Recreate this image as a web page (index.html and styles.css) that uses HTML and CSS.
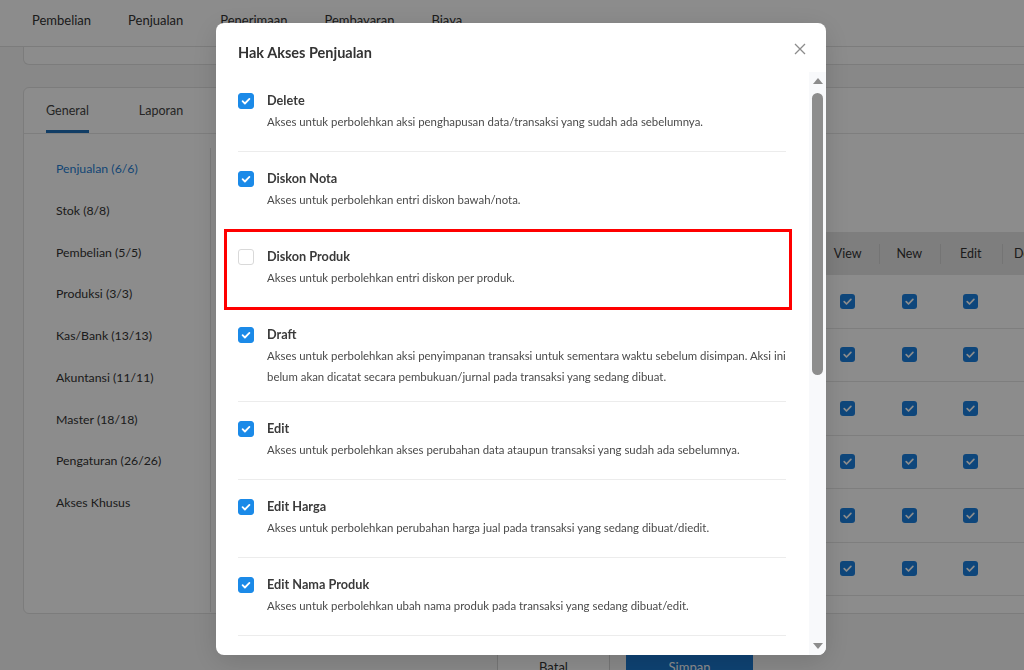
FILE: index.html
```html
<!DOCTYPE html>
<html lang="id">
<head>
    <meta charset="UTF-8">
    <meta name="viewport" content="width=device-width, initial-scale=1.0">
    <title>Hak Akses Penjualan</title>
    <link rel="stylesheet" href="styles.css">
</head>
<body>
    <div class="page">
        <header class="topnav">
            <a href="#">Pembelian</a>
            <a href="#">Penjualan</a>
            <a href="#">Penerimaan</a>
            <a href="#">Pembayaran</a>
            <a href="#">Biaya</a>
        </header>

        <div class="card card-top"></div>

        <section class="card card-main">
            <div class="tabs">
                <span class="tab active">General</span>
                <span class="tab">Laporan</span>
            </div>
            <div class="card-body">
                <ul class="side-menu">
                    <li class="active">Penjualan (6/6)</li>
                    <li>Stok (8/8)</li>
                    <li>Pembelian (5/5)</li>
                    <li>Produksi (3/3)</li>
                    <li>Kas/Bank (13/13)</li>
                    <li>Akuntansi (11/11)</li>
                    <li>Master (18/18)</li>
                    <li>Pengaturan (26/26)</li>
                    <li>Akses Khusus</li>
                </ul>
                <div class="perm-table">
                    <div class="perm-row perm-head">
                        <div class="cell name">Transaksi</div>
                        <div class="cell">View</div>
                        <div class="cell">New</div>
                        <div class="cell">Edit</div>
                        <div class="cell">Delete</div>
                        <div class="cell">Print</div>
                    </div>
                    <div class="perm-row">
                        <div class="cell name">Pesanan Penjualan</div>
                        <div class="cell"><span class="tick"></span></div>
                        <div class="cell"><span class="tick"></span></div>
                        <div class="cell"><span class="tick"></span></div>
                        <div class="cell"><span class="tick"></span></div>
                        <div class="cell"><span class="tick"></span></div>
                    </div>
                    <div class="perm-row">
                        <div class="cell name">Pengiriman</div>
                        <div class="cell"><span class="tick"></span></div>
                        <div class="cell"><span class="tick"></span></div>
                        <div class="cell"><span class="tick"></span></div>
                        <div class="cell"><span class="tick"></span></div>
                        <div class="cell"><span class="tick"></span></div>
                    </div>
                    <div class="perm-row">
                        <div class="cell name">Penjualan</div>
                        <div class="cell"><span class="tick"></span></div>
                        <div class="cell"><span class="tick"></span></div>
                        <div class="cell"><span class="tick"></span></div>
                        <div class="cell"><span class="tick"></span></div>
                        <div class="cell"><span class="tick"></span></div>
                    </div>
                    <div class="perm-row">
                        <div class="cell name">Retur Penjualan</div>
                        <div class="cell"><span class="tick"></span></div>
                        <div class="cell"><span class="tick"></span></div>
                        <div class="cell"><span class="tick"></span></div>
                        <div class="cell"><span class="tick"></span></div>
                        <div class="cell"><span class="tick"></span></div>
                    </div>
                    <div class="perm-row">
                        <div class="cell name">Penawaran</div>
                        <div class="cell"><span class="tick"></span></div>
                        <div class="cell"><span class="tick"></span></div>
                        <div class="cell"><span class="tick"></span></div>
                        <div class="cell"><span class="tick"></span></div>
                        <div class="cell"><span class="tick"></span></div>
                    </div>
                    <div class="perm-row">
                        <div class="cell name">Uang Muka</div>
                        <div class="cell"><span class="tick"></span></div>
                        <div class="cell"><span class="tick"></span></div>
                        <div class="cell"><span class="tick"></span></div>
                        <div class="cell"><span class="tick"></span></div>
                        <div class="cell"><span class="tick"></span></div>
                    </div>
                </div>
            </div>
        </section>

        <div class="form-actions">
            <button class="btn">Batal</button>
            <button class="btn btn-primary">Simpan</button>
        </div>
    </div>

    <div class="backdrop"></div>

    <div class="modal">
        <div class="modal-header">
            <h2>Hak Akses Penjualan</h2>
            <svg class="close" width="12" height="12" viewBox="0 0 12 12">
                <path d="M1 1L11 11M11 1L1 11" stroke="#8c8c8c" stroke-width="1.3" fill="none"/>
            </svg>
        </div>
        <div class="modal-body">
            <ul class="access-list">
                <li class="access-item">
                    <span class="check on"></span>
                    <div class="access-text">
                        <div class="access-title">Delete</div>
                        <div class="access-desc">Akses untuk perbolehkan aksi penghapusan data/transaksi yang sudah ada sebelumnya.</div>
                    </div>
                </li>
                <li class="access-item">
                    <span class="check on"></span>
                    <div class="access-text">
                        <div class="access-title">Diskon Nota</div>
                        <div class="access-desc">Akses untuk perbolehkan entri diskon bawah/nota.</div>
                    </div>
                </li>
                <li class="access-item marked">
                    <span class="check"></span>
                    <div class="access-text">
                        <div class="access-title">Diskon Produk</div>
                        <div class="access-desc">Akses untuk perbolehkan entri diskon per produk.</div>
                    </div>
                </li>
                <li class="access-item">
                    <span class="check on"></span>
                    <div class="access-text">
                        <div class="access-title">Draft</div>
                        <div class="access-desc">Akses untuk perbolehkan aksi penyimpanan transaksi untuk sementara waktu sebelum disimpan. Aksi ini<br>belum akan dicatat secara pembukuan/jurnal pada transaksi yang sedang dibuat.</div>
                    </div>
                </li>
                <li class="access-item">
                    <span class="check on"></span>
                    <div class="access-text">
                        <div class="access-title">Edit</div>
                        <div class="access-desc">Akses untuk perbolehkan akses perubahan data ataupun transaksi yang sudah ada sebelumnya.</div>
                    </div>
                </li>
                <li class="access-item">
                    <span class="check on"></span>
                    <div class="access-text">
                        <div class="access-title">Edit Harga</div>
                        <div class="access-desc">Akses untuk perbolehkan perubahan harga jual pada transaksi yang sedang dibuat/diedit.</div>
                    </div>
                </li>
                <li class="access-item">
                    <span class="check on"></span>
                    <div class="access-text">
                        <div class="access-title">Edit Nama Produk</div>
                        <div class="access-desc">Akses untuk perbolehkan ubah nama produk pada transaksi yang sedang dibuat/edit.</div>
                    </div>
                </li>
                <li class="access-item">
                    <span class="check on"></span>
                    <div class="access-text">
                        <div class="access-title">Harga Khusus</div>
                        <div class="access-desc">Akses untuk perbolehkan penggunaan harga khusus pada transaksi.</div>
                    </div>
                </li>
            </ul>
            <div class="scrollbar">
                <span class="arrow-up"></span>
                <span class="thumb"></span>
                <span class="arrow-down"></span>
            </div>
        </div>
    </div>
</body>
</html>
```

FILE: styles.css
```css
body {
    margin: 0;
    font-family: 'Lato', 'Open Sans', sans-serif;
    background-color: #f7f7f7;
    color: #333;
    overflow: hidden;
}
.page {
    width: 1024px;
    height: 670px;
    overflow: hidden;
}
.topnav {
    height: 47px;
    background-color: #fff;
    border-bottom: 1px solid #e2e2e2;
    padding: 10px 0 0 13.5px;
    box-sizing: border-box;
    display: flex;
}
.topnav a {
    color: #333;
    text-decoration: none;
    font-size: 13px;
    line-height: 20px;
    padding: 0 18.5px;
}
.card {
    background-color: #fff;
    border: 1px solid #e2e2e2;
    margin-left: 23px;
    width: 1080px;
}
.card-top {
    height: 17px;
    border-top: none;
    border-radius: 0 0 6px 6px;
    margin-bottom: 22px;
}
.card-main {
    height: 525px;
    border-radius: 6px;
}
.tabs {
    height: 45px;
    border-bottom: 1px solid #e6e6e6;
    display: flex;
    gap: 50px;
    padding-left: 22px;
}
.tab {
    font-size: 12.5px;
    display: flex;
    align-items: center;
    border-bottom: 3px solid transparent;
    padding-top: 3px;
    color: #444;
}
.tab.active {
    border-bottom-color: #1f6fb8;
}
.card-body {
    display: flex;
}
.side-menu {
    flex: none;
    list-style: none;
    margin: 14px 0 0;
    padding: 0 0 0 32px;
    width: 154px;
    height: 464px;
    border-right: 1px solid #e2e2e2;
}
.side-menu li {
    font-size: 12.3px;
    line-height: 41.75px;
    color: #333;
}
.side-menu li.active {
    color: #1f7fd6;
}
.perm-table {
    flex: none;
    margin-top: 98px;
    padding-left: 16px;
}
.perm-row {
    display: grid;
    grid-template-columns: 590px repeat(5, 61.5px);
    height: 53.5px;
    border-bottom: 1px solid #e6e6e6;
    box-sizing: border-box;
}
.perm-head {
    height: 43px;
    background-color: #e5e5e5;
    border-bottom: none;
}
.cell {
    display: flex;
    align-items: center;
    justify-content: center;
    font-size: 12.5px;
}
.perm-head .cell + .cell + .cell {
    background: linear-gradient(#d4d4d4, #d4d4d4) left center / 1px 20px no-repeat;
}
.cell.name {
    justify-content: flex-start;
    padding-left: 16px;
}
.tick {
    width: 15px;
    height: 15px;
    border-radius: 3px;
    background: #1a80e0 url("data:image/svg+xml;utf8,<svg xmlns='http://www.w3.org/2000/svg' width='15' height='15'><path d='M4.2 7.7l2.3 2.3 4.4-4.6' stroke='white' stroke-width='1.7' fill='none' stroke-linecap='round' stroke-linejoin='round'/></svg>") center no-repeat;
}
.form-actions {
    display: flex;
    gap: 16px;
    padding-left: 497px;
    margin-top: 35px;
}
.btn {
    font-family: inherit;
    font-size: 13px;
    width: 113px;
    height: 36px;
    border: 1px solid #d6d6d6;
    background-color: #fff;
    color: #333;
    border-radius: 3px;
}
.btn-primary {
    width: 127px;
    background-color: #1a78cf;
    border-color: #1a78cf;
    color: #fff;
}

/* modal */
.backdrop {
    position: fixed;
    inset: 0;
    background-color: rgba(0, 0, 0, 0.45);
}
.modal {
    position: fixed;
    top: 23px;
    left: 216px;
    width: 610px;
    height: 632px;
    background-color: #fff;
    border-radius: 8px;
    overflow: hidden;
    display: flex;
    flex-direction: column;
    box-shadow: 0 6px 28px rgba(0, 0, 0, 0.14);
}
.modal-header {
    display: flex;
    justify-content: space-between;
    align-items: flex-start;
    padding: 20px 20px 9px 22px;
}
.modal-header h2 {
    margin: 0;
    font-size: 14.5px;
    line-height: 20px;
    font-weight: 700;
    color: #333;
}
.modal-body {
    flex: 1;
    min-height: 0;
    display: flex;
}
.access-list {
    flex: 1;
    list-style: none;
    margin: 0;
    padding: 2px 23px 0 22px;
    overflow: hidden;
}
.access-item {
    display: flex;
    gap: 13px;
    padding: 16px 0 14px;
    border-bottom: 1px solid #ececec;
    position: relative;
}
.access-item.marked::after {
    content: "";
    position: absolute;
    left: -14px;
    right: -6px;
    top: -1px;
    bottom: -3px;
    border: 3px solid #ff0000;
}
.access-text {
    min-height: 47px;
}
.check {
    flex: none;
    width: 14px;
    height: 14px;
    margin-top: 3px;
    border: 1px solid #d9d9d9;
    border-radius: 3px;
    background-color: #fff;
}
.check.on {
    border-color: #1b8ae8;
    background: #1b8ae8 url("data:image/svg+xml;utf8,<svg xmlns='http://www.w3.org/2000/svg' width='14' height='14'><path d='M3.6 7.2l2.3 2.3 4.5-4.6' stroke='white' stroke-width='1.8' fill='none' stroke-linecap='round' stroke-linejoin='round'/></svg>") center no-repeat;
}
.access-title {
    font-size: 12.7px;
    font-weight: 700;
    line-height: 21px;
    color: #3a3a3a;
}
.access-desc {
    font-size: 11.4px;
    line-height: 21px;
    color: #4a4a4a;
    white-space: nowrap;
}
.scrollbar {
    width: 17px;
    background-color: #f8f9fb;
    display: flex;
    flex-direction: column;
    align-items: center;
}
.arrow-up,
.arrow-down {
    width: 0;
    height: 0;
    border-left: 5.5px solid transparent;
    border-right: 5.5px solid transparent;
}
.arrow-up {
    margin-top: 6px;
    border-bottom: 6px solid #8c8c8c;
}
.arrow-down {
    margin-top: auto;
    margin-bottom: 6px;
    border-top: 6px solid #8c8c8c;
}
.thumb {
    margin-top: 9px;
    width: 11px;
    height: 282px;
    border-radius: 6px;
    background-color: #8d8d8d;
}
```
